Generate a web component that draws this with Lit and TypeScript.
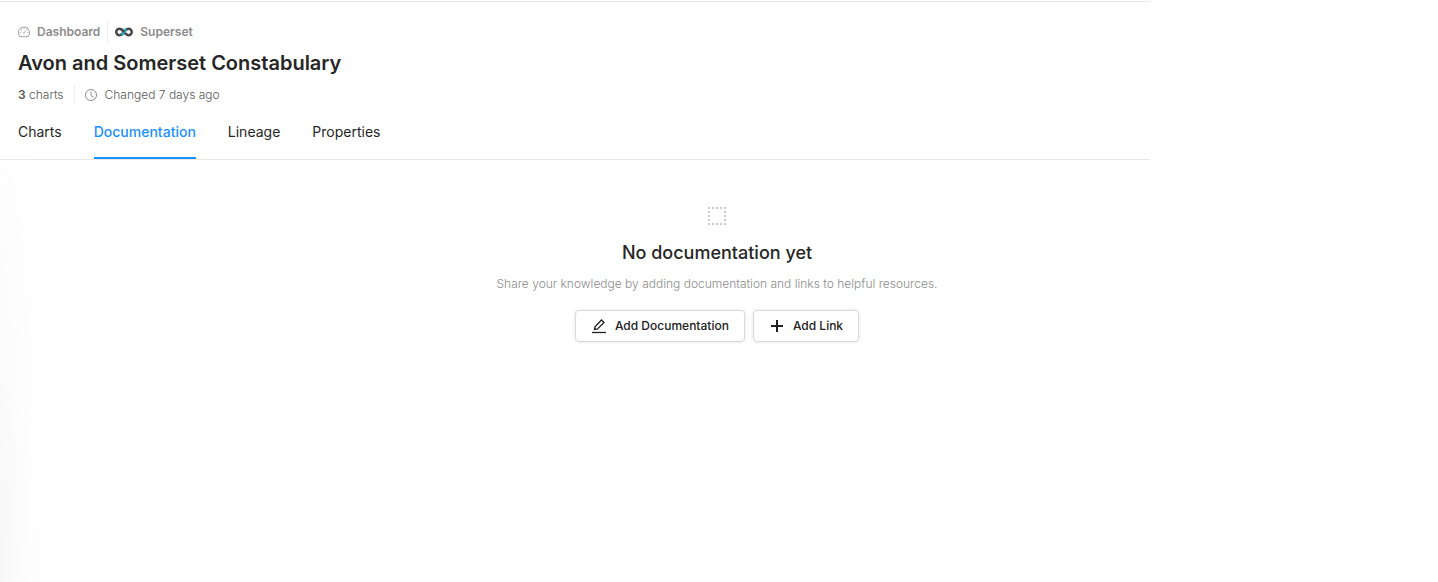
import { LitElement, html, css, svg } from "lit";
import { customElement, state } from "lit/decorators.js";

const dashboardIcon = svg`<path d="M924.8 385.6a446.7 446.7 0 00-96-142.4 446.7 446.7 0 00-142.4-96C631.1 123.800 572.500 112 512 112s-119.100 11.800-174.400 35.200a446.700 446.700 0 00-142.400 96 446.700 446.700 0 00-96 142.400C75.800 440.900 64 499.500 64 560c0 132.700 58.300 257.700 159.900 343.100l1.700 1.400c5.800 4.800 13.100 7.500 20.600 7.500h531.700c7.500 0 14.800-2.700 20.600-7.500l1.700-1.400C901.700 817.700 960 692.700 960 560c0-60.500-11.900-119.100-35.200-174.400zM761.400 836H262.600A371.120 371.120 0 01140 560c0-99.400 38.700-192.800 109-263 70.300-70.300 163.700-109 263-109 99.400 0 192.800 38.700 263 109 70.300 70.300 109 163.700 109 263 0 105.600-44.500 205.500-122.600 276zM623.500 421.500a8.030 8.030 0 00-11.300 0L527.700 506c-18.700-5-39.400-.2-54.100 14.500a55.950 55.950 0 000 79.200 55.950 55.950 0 0079.200 0 55.870 55.870 0 0014.500-54.100l84.500-84.500c3.100-3.100 3.100-8.200 0-11.300l-28.300-28.300zM490 320h44c4.400 0 8-3.600 8-8v-80c0-4.400-3.600-8-8-8h-44c-4.400 0-8 3.600-8 8v80c0 4.400 3.600 8 8 8zm260 218v44c0 4.400 3.600 8 8 8h80c4.400 0 8-3.600 8-8v-44c0-4.400-3.600-8-8-8h-80c-4.400 0-8 3.600-8 8zm12.700-197.200l-31.100-31.100a8.030 8.030 0 00-11.300 0l-56.600 56.600a8.030 8.030 0 000 11.300l31.100 31.100c3.100 3.100 8.200 3.100 11.300 0l56.600-56.600c3.100-3.100 3.100-8.200 0-11.300zm-458.600-31.100a8.030 8.030 0 00-11.300 0l-31.100 31.100a8.030 8.030 0 000 11.300l56.600 56.600c3.100 3.100 8.200 3.100 11.300 0l31.100-31.100c3.100-3.100 3.100-8.200 0-11.300l-56.600-56.600zM262 530h-80c-4.400 0-8 3.600-8 8v44c0 4.400 3.600 8 8 8h80c4.400 0 8-3.600 8-8v-44c0-4.400-3.600-8-8-8z" fill="currentColor"/>`;

@customElement("app-root")
export class AppRoot extends LitElement {
  @state() private active = "Documentation";

  static styles = css`
    :host {
      display: block;
      box-sizing: border-box;
      min-height: 100vh;
      color: #262626;
      font-family: Inter, "Noto Sans", sans-serif;
      font-size: 12px;
      line-height: 20px;
      background: radial-gradient(ellipse 44px 560px at 0 100%, #f7f7f7, #fcfcfc 50%, #fff) #fff;
    }
    .entity {
      width: 80%;
      box-sizing: border-box;
      border-top: 1px solid #e8e8e8;
      border-bottom: 1px solid #e8e8e8;
      margin-top: 1px;
    }
    .header { padding: 20px 18px 0; }
    .row { display: flex; align-items: center; }
    .kind { color: #8c8c8c; font-weight: 600; }
    .rule { width: 1px; align-self: stretch; background: #eee; }
    .kind .rule { margin: 0 7px; }
    .kind svg { margin-right: 7px; color: #a6a6a6; }
    h1 { margin: 6px 0 7px; font-size: 20px; line-height: 30px; font-weight: 600; }
    .meta { color: #595959; font-weight: 300; }
    .meta b { font-weight: 600; }
    .meta .rule { margin: 0 10px; }
    .meta svg { margin-right: 8px; color: #8c8c8c; }
    nav { display: flex; gap: 32px; padding: 0 18px; margin-top: 16px; }
    nav a {
      font-size: 14px;
      line-height: 22px;
      padding: 0 0 14px;
      color: #262626;
      text-decoration: none;
      border-bottom: 2px solid transparent;
    }
    nav a.on { color: #1890ff; border-color: #1890ff; font-weight: 500; }
    .empty {
      display: flex;
      flex-direction: column;
      align-items: center;
      padding: 47px 4px 0 0;
      text-align: center;
    }
    h2 { margin: 15px 0 8px; font-size: 18px; line-height: 26px; font-weight: 500; }
    p { margin: 0 0 16px; color: #8c8c8c; font-weight: 300; }
    .actions { display: flex; gap: 8px; }
    button {
      display: flex;
      align-items: center;
      gap: 8px;
      height: 32px;
      padding: 0 15px;
      border: 1px solid #d9d9d9;
      border-radius: 4px;
      background: #fff;
      box-shadow: 0 0 4px rgba(0, 0, 0, 0.1);
      color: #212121;
      font: 500 12px/20px Inter, "Noto Sans", sans-serif;
      white-space: nowrap;
      cursor: pointer;
    }
    svg { display: block; flex: none; }
  `;

  private tab(name: string) {
    const on = this.active === name;
    return html`<a href="#${name.toLowerCase()}" class=${on ? "on" : ""} aria-current=${on ? "page" : "false"}
      @click=${() => (this.active = name)}>${name}</a>`;
  }

  render() {
    return html`
      <section class="entity">
        <header class="header">
          <div class="row kind">
            <svg width="12" height="12" viewBox="64 64 896 896">${dashboardIcon}</svg>
            <span>Dashboard</span>
            <span class="rule"></span>
            <svg width="18" height="10" viewBox="0 0 36 20" fill="none" stroke-width="5">
              <path d="M18 10C14 5 11.500 3.500 9 3.500A6.500 6.500 0 0 0 9 16.500C11.500 16.500 14 15 18 10" stroke="#484848"/>
              <path d="M18 10C22 15 24.500 16.500 27 16.500A6.500 6.500 0 0 0 27 3.500C24.500 3.500 22 5 18 10" stroke="#484848"/>
              <path d="M13 16C15.500 14 16.500 12 18 10C19.500 8 20.500 6 23 4" stroke="#20a7c9"/>
              <path d="M13 4.500C15 6 16.500 8 18 10" stroke="#484848"/>
            </svg>
            <span>Superset</span>
          </div>
          <h1>Avon and Somerset Constabulary</h1>
          <div class="row meta">
            <span><b>3</b> charts</span>
            <span class="rule"></span>
            <svg width="12" height="12" viewBox="0 0 12 12" fill="none" stroke="currentColor">
              <circle cx="6" cy="6" r="5.500"/><path d="M6 2.500V6.500L8.500 8.200"/>
            </svg>
            <span>Changed 7 days ago</span>
          </div>
        </header>
        <nav>${["Charts", "Documentation", "Lineage", "Properties"].map((n) => this.tab(n))}</nav>
      </section>
      <section class="empty">
        <svg width="18" height="18" viewBox="0 0 18 18" fill="none" stroke="#cbcbcb" stroke-width="2" stroke-dasharray="2 2">
          <path d="M0 1H18M0 17H18M1 0V18M17 0V18"/>
        </svg>
        <h2>No documentation yet</h2>
        <p>Share your knowledge by adding documentation and links to helpful resources.</p>
        <div class="actions">
          <button type="button">
            <svg width="16" height="16" viewBox="0 0 16 16" fill="none" stroke="currentColor" stroke-width="1.300">
              <path d="M1 14.500H15"/><path d="M3.500 11.500L4.200 8.500L10.500 2L13 4.500L6.500 10.900Z"/>
            </svg>
            Add Documentation
          </button>
          <button type="button">
            <svg width="16" height="16" viewBox="0 0 16 16" fill="none" stroke="currentColor" stroke-width="2">
              <path d="M8 2V14M2 8H14"/>
            </svg>
            Add Link
          </button>
        </div>
      </section>
    `;
  }
}
